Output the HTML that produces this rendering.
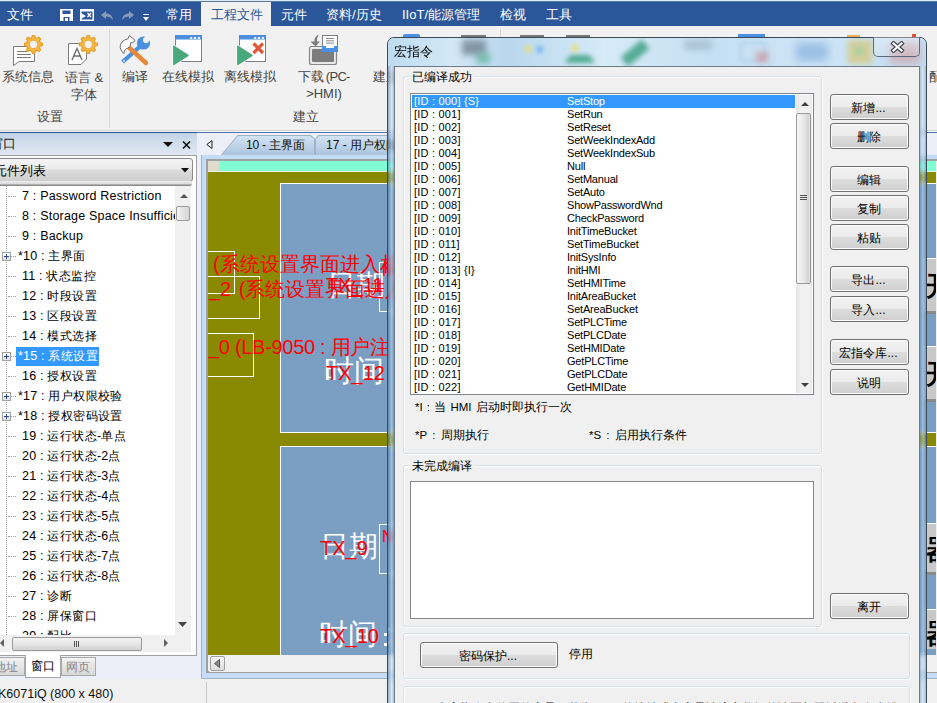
<!DOCTYPE html>
<html><head><meta charset="utf-8">
<style>
*{margin:0;padding:0;box-sizing:border-box}
html,body{width:937px;height:703px;overflow:hidden;background:#f0f0f0;font-family:"Liberation Sans",sans-serif;font-size:12px;color:#000}
.a{position:absolute}
.t{position:absolute;white-space:nowrap;line-height:1}
/* menu */
#menu{left:0;top:0;width:937px;height:26px;background:#2b579a;border-top:1px solid #d6eaf7;box-shadow:inset 0 1px 0 #5f7a96}
.mi{position:absolute;top:7px;color:#fff;font-size:13px;line-height:14px;white-space:nowrap}
#ribbon{left:0;top:26px;width:937px;height:106px;background:#f1f1f1;border-bottom:1px solid #fafafa;box-shadow:inset 0 -1px 0 #d3d3d3}
.rl{position:absolute;color:#444;font-size:13px;line-height:17px;white-space:nowrap;text-align:center}
/* left panel */
#lp{left:0;top:132px;width:197px;height:546px;background:#fff;border-top:1px solid #2b579a}
.cj{font-size:12px;letter-spacing:0.4px}
.tr{position:absolute;left:0;height:20px;line-height:20px;font-size:12.5px;letter-spacing:0.2px;white-space:nowrap;color:#000}
</style></head><body>

<!-- MENU BAR -->
<div id="menu" class="a">
  <div class="mi" style="left:7px">文件</div>
  <!-- save icon -->
  <svg class="a" style="left:60px;top:8px" width="13" height="12" viewBox="0 0 13 12"><path d="M0 0H13V12H0Z" fill="#fff"/><path d="M2.5 1.5H10.5V5H2.5Z M3.5 8H9.5V12H3.5Z" fill="#2b579a"/><path d="M5 9H8V12H5Z" fill="#fff"/></svg>
  <svg class="a" style="left:80px;top:8px" width="14" height="12" viewBox="0 0 14 12"><path d="M0 0H14V12H0Z" fill="#fff"/><path d="M1.5 2.5H12.5V10.5H1.5Z" fill="#2b579a"/><path d="M1 4L6 7L1 10Z" fill="#fff"/><path d="M7.5 4L11 8M11 4L7.5 8" stroke="#fff" stroke-width="1.3"/></svg>
  <svg class="a" style="left:101px;top:10px" width="12" height="9" viewBox="0 0 12 9"><path d="M0 4L5 0V2.5C9 2.5 11.5 5 12 9C10 6.5 8 5.5 5 5.5V8Z" fill="#8a9bb8"/></svg>
  <svg class="a" style="left:122px;top:10px" width="12" height="9" viewBox="0 0 12 9"><path d="M12 4L7 0V2.5C3 2.5 0.5 5 0 9C2 6.5 4 5.5 7 5.5V8Z" fill="#8a9bb8"/></svg>
  <svg class="a" style="left:143px;top:13px" width="6" height="7" viewBox="0 0 6 7"><path d="M0 0H6V1H0Z M0 3H6L3 7Z" fill="#fff"/></svg>
  <div class="mi" style="left:166px">常用</div>
  <div class="a" style="left:201px;top:1px;width:70px;height:25px;background:#f1f1f1"></div>
  <div class="mi" style="left:211px;color:#2b579a">工程文件</div>
  <div class="mi" style="left:281px">元件</div>
  <div class="mi" style="left:326px">资料/历史</div>
  <div class="mi" style="left:402px">IIoT/能源管理</div>
  <div class="mi" style="left:500px">检视</div>
  <div class="mi" style="left:546px">工具</div>
</div>

<!-- RIBBON -->
<div id="ribbon" class="a">
  <svg class="a" style="left:0;top:0" width="400" height="106" viewBox="0 26 400 106">
    <!-- sys info -->
    <path d="M13.5 46.5H34.5V61.5H19L13.5 65.5Z" fill="#fff" stroke="#7a7a7a" stroke-width="1"/>
    <path d="M17 51.5H27M17 54.5H31M17 57.5H31" stroke="#7a7a7a" stroke-width="1"/>
    <g transform="translate(33.5 44.4)"><path d="M6.81 -1.63 L8.92 -1.20 L8.92 1.20 L6.81 1.63 L5.97 3.66 L7.15 5.46 L5.46 7.15 L3.66 5.97 L1.63 6.81 L1.20 8.92 L-1.20 8.92 L-1.63 6.81 L-3.66 5.97 L-5.46 7.15 L-7.15 5.46 L-5.97 3.66 L-6.81 1.63 L-8.92 1.20 L-8.92 -1.20 L-6.81 -1.63 L-5.97 -3.66 L-7.15 -5.46 L-5.46 -7.15 L-3.66 -5.97 L-1.63 -6.81 L-1.20 -8.92 L1.20 -8.92 L1.63 -6.81 L3.66 -5.97 L5.46 -7.15 L7.15 -5.46 L5.97 -3.66Z" fill="#f8b840" stroke="#e2a030" stroke-width="1.2" stroke-linejoin="round"/><circle r="4.2" fill="#f1f1f1" stroke="#e2a030" stroke-width="0.8"/></g>
    <!-- lang -->
    <path d="M68.5 43.5H86.5V59L81 64.5H68.5Z" fill="#fff" stroke="#7a7a7a" stroke-width="1"/>
    <path d="M72 60L77 48.5L82 60M73.6 56H80.4" stroke="#6e6e6e" stroke-width="1.4" fill="none"/>
    <g transform="translate(88.3 44.4)"><path d="M6.81 -1.63 L8.92 -1.20 L8.92 1.20 L6.81 1.63 L5.97 3.66 L7.15 5.46 L5.46 7.15 L3.66 5.97 L1.63 6.81 L1.20 8.92 L-1.20 8.92 L-1.63 6.81 L-3.66 5.97 L-5.46 7.15 L-7.15 5.46 L-5.97 3.66 L-6.81 1.63 L-8.92 1.20 L-8.92 -1.20 L-6.81 -1.63 L-5.97 -3.66 L-7.15 -5.46 L-5.46 -7.15 L-3.66 -5.97 L-1.63 -6.81 L-1.20 -8.92 L1.20 -8.92 L1.63 -6.81 L3.66 -5.97 L5.46 -7.15 L7.15 -5.46 L5.97 -3.66Z" fill="#f8b840" stroke="#e2a030" stroke-width="1.2" stroke-linejoin="round"/><circle r="4.2" fill="#f1f1f1" stroke="#e2a030" stroke-width="0.8"/></g>
    <!-- compile -->
    <path d="M122.5 62L140 46.5" stroke="#4a90e2" stroke-width="4.2" stroke-linecap="butt"/>
    <circle cx="143.5" cy="43" r="6.6" fill="#4a90e2"/>
    <circle cx="146" cy="40" r="3.1" fill="#f1f1f1"/>
    <path d="M145 37L149.5 32.5L153.5 36.5L149 41Z" fill="#f1f1f1"/>
    <circle cx="124" cy="60.8" r="0.9" fill="#fff"/>
    <path d="M129 47.5L146 63" stroke="#e8893a" stroke-width="4.4" stroke-linecap="round"/>
    <path d="M123.8 53.5C121 51 119.8 48 120.3 45.5C121 42 124 39.5 127.8 39L129.5 35.5L135.2 40.5L132.5 42.8L130.8 42.5L130 46.5L127.5 48.3C125.5 48.5 124.5 50 123.8 53.5Z" fill="#fff" stroke="#6a6a6a" stroke-width="1" stroke-linejoin="round"/>
    <!-- online sim -->
    <rect x="175.5" y="35.5" width="26" height="26" fill="#fff" stroke="#808080"/>
    <rect x="175" y="35" width="27" height="4.5" fill="#4a90e2"/>
    <rect x="190.3" y="37" width="2" height="2" fill="#fff"/><rect x="194" y="37" width="2" height="2" fill="#fff"/><rect x="197.8" y="37" width="2" height="2" fill="#fff"/>
    <path d="M173.5 46L188.5 55.3L173.5 64.7Z" fill="#4aa87e" stroke="#f6f6f6" stroke-width="3" stroke-linejoin="round" opacity=".9"/><path d="M173.8 46.3L188 55.3L173.8 64.4Z" fill="#4aa87e" stroke="#4aa87e" stroke-width="1.4" stroke-linejoin="round"/>
    <!-- offline sim -->
    <rect x="239.5" y="35.5" width="26" height="26" fill="#fff" stroke="#808080"/>
    <rect x="239" y="35" width="27" height="4.5" fill="#4a90e2"/>
    <rect x="254.3" y="37" width="2" height="2" fill="#fff"/><rect x="258" y="37" width="2" height="2" fill="#fff"/><rect x="261.8" y="37" width="2" height="2" fill="#fff"/>
    <path d="M237.5 46L252.5 55.3L237.5 64.7Z" fill="#4aa87e" stroke="#f6f6f6" stroke-width="3" stroke-linejoin="round" opacity=".9"/><path d="M237.8 46.3L252 55.3L237.8 64.4Z" fill="#4aa87e" stroke="#4aa87e" stroke-width="1.4" stroke-linejoin="round"/>
    <path d="M253.5 43.5L263 53M263 43.5L253.5 53" stroke="#e0573a" stroke-width="3.2"/>
    <!-- download -->
    <rect x="309.5" y="46.5" width="27" height="18" rx="2" fill="#e8e8e8" stroke="#888" stroke-width="1.2"/>
    <rect x="312" y="49" width="22" height="13" rx="1" fill="#7d7d7d"/>
    <path d="M319 34.5C315.5 36 314 38.5 314.5 41.5L310.5 41.5L315.5 46.5L320 41.5L317 41.5C316.8 39 317.5 36.5 319 34.5Z" fill="#7d7d7d"/>
    <rect x="322" y="35" width="16" height="17" fill="#7d7d7d"/>
    <rect x="323" y="36" width="14" height="10" fill="#fff"/>
    <rect x="322" y="46" width="16" height="6" fill="#4a90e2"/>
    <rect x="326" y="46" width="8" height="2" fill="#fff"/>
    <path d="M326 38.5H334M326 40.8H334M326 43.1H334" stroke="#7d7d7d" stroke-width="0.9"/>
  </svg>
  <div class="a" style="left:109px;top:3px;width:1px;height:99px;background:#d6d6d6"></div>
  <div class="rl" style="left:2px;top:42px">系统信息</div>
  <div class="rl" style="left:64px;top:43px;width:40px">语言 &amp;<br>字体</div>
  <div class="rl" style="left:122px;top:42px">编译</div>
  <div class="rl" style="left:162px;top:42px">在线模拟</div>
  <div class="rl" style="left:224px;top:42px">离线模拟</div>
  <div class="rl" style="left:294px;top:42px;width:60px"><span style="letter-spacing:-0.7px">下载 (PC-</span><br>&gt;HMI)</div>
  <div class="rl" style="left:373px;top:42px">建立</div>
  <div class="rl" style="left:37px;top:82px">设置</div>
  <div class="rl" style="left:293px;top:82px">建立</div>
  <div class="rl" style="left:929px;top:42px">配</div>
</div>

<!-- LEFT PANEL -->
<div id="lp" class="a">
  <!-- header -->
  <div class="a" style="left:0;top:0;width:197px;height:22px;background:linear-gradient(#c4d4e6,#dfe8f3)"></div>
  <div class="t" style="left:-10px;top:4px;font-size:13px;color:#222">窗口</div>
  <svg class="a" style="left:162px;top:8px" width="30" height="10" viewBox="0 0 30 10"><path d="M1 1H11L6 6Z" fill="#111"/><path d="M21 0.5L28 7.5M28 0.5L21 7.5" stroke="#111" stroke-width="1.6"/></svg>
  <div class="a" style="left:0;top:22px;width:197px;height:501px;background:#fff;border-right:1px solid #a0a0a0;border-top:1px solid #a0a0a0;border-bottom:1px solid #a0a0a0"></div>
  <div class="a" style="left:197px;top:1px;width:4px;height:545px;background:#eceef8"></div>
  <!-- dropdown -->
  <div class="a" style="left:-5px;top:25px;width:198px;height:24px;border:1px solid #8a8a8a;border-radius:3px;background:linear-gradient(#f4f4f4 0%,#ebebeb 45%,#dcdcdc 50%,#cfcfcf 100%)"></div>
  <div class="t" style="left:-6px;top:31px;font-size:13px">元件列表</div>
  <svg class="a" style="left:181px;top:35px" width="8" height="5" viewBox="0 0 8 5"><path d="M0 0H8L4 4.5Z" fill="#111"/></svg>
  <div class="a" style="left:0;top:48px;width:192px;height:5px;background:linear-gradient(#eeeeee,#d8d8d8 60%,#8a8a8a 80%,#8a8a8a);border-radius:0 0 2px 0"></div>
  <!-- tree -->
  <div class="a" style="left:0;top:53px;width:191px;height:449px;overflow:hidden;background:#fff">
    <div class="a" style="left:6px;top:0;width:1px;height:449px;border-left:1px dotted #a0a0a0"></div>
    <div class="a" style="left:8px;top:10px;width:8px;height:1px;border-top:1px dotted #a0a0a0"></div>
<div class="tr" style="left:22px;top:0px">7 : Password Restriction</div>
<div class="a" style="left:8px;top:30px;width:8px;height:1px;border-top:1px dotted #a0a0a0"></div>
<div class="tr" style="left:22px;top:20px">8 : Storage Space Insufficient</div>
<div class="a" style="left:8px;top:50px;width:8px;height:1px;border-top:1px dotted #a0a0a0"></div>
<div class="tr" style="left:22px;top:40px">9 : Backup</div>
<div class="a" style="left:8px;top:70px;width:8px;height:1px;border-top:1px dotted #a0a0a0"></div>
<div class="a" style="left:2px;top:66px;width:9px;height:9px;border:1px solid #a0a0a0;background:linear-gradient(#fff,#e0e0e0)"><div class="a" style="left:1px;top:3px;width:5px;height:1px;background:#2c4a8a"></div><div class="a" style="left:3px;top:1px;width:1px;height:5px;background:#2c4a8a"></div></div>
<div class="tr" style="left:18px;top:60px">*10 : <span class="cj">主界面</span></div>
<div class="a" style="left:8px;top:90px;width:8px;height:1px;border-top:1px dotted #a0a0a0"></div>
<div class="tr" style="left:22px;top:80px">11 : <span class="cj">状态监控</span></div>
<div class="a" style="left:8px;top:110px;width:8px;height:1px;border-top:1px dotted #a0a0a0"></div>
<div class="tr" style="left:22px;top:100px">12 : <span class="cj">时段设置</span></div>
<div class="a" style="left:8px;top:130px;width:8px;height:1px;border-top:1px dotted #a0a0a0"></div>
<div class="tr" style="left:22px;top:120px">13 : <span class="cj">区段设置</span></div>
<div class="a" style="left:8px;top:150px;width:8px;height:1px;border-top:1px dotted #a0a0a0"></div>
<div class="tr" style="left:22px;top:140px">14 : <span class="cj">模式选择</span></div>
<div class="a" style="left:8px;top:170px;width:8px;height:1px;border-top:1px dotted #a0a0a0"></div>
<div class="a" style="left:2px;top:166px;width:9px;height:9px;border:1px solid #a0a0a0;background:linear-gradient(#fff,#e0e0e0)"><div class="a" style="left:1px;top:3px;width:5px;height:1px;background:#2c4a8a"></div><div class="a" style="left:3px;top:1px;width:1px;height:5px;background:#2c4a8a"></div></div>
<div class="a" style="left:16px;top:161px;width:83px;height:19px;background:#3399ff"></div>
<div class="tr" style="left:18px;top:160px;color:#fff">*15 : <span class="cj">系统设置</span></div>
<div class="a" style="left:8px;top:190px;width:8px;height:1px;border-top:1px dotted #a0a0a0"></div>
<div class="tr" style="left:22px;top:180px">16 : <span class="cj">授权设置</span></div>
<div class="a" style="left:8px;top:210px;width:8px;height:1px;border-top:1px dotted #a0a0a0"></div>
<div class="a" style="left:2px;top:206px;width:9px;height:9px;border:1px solid #a0a0a0;background:linear-gradient(#fff,#e0e0e0)"><div class="a" style="left:1px;top:3px;width:5px;height:1px;background:#2c4a8a"></div><div class="a" style="left:3px;top:1px;width:1px;height:5px;background:#2c4a8a"></div></div>
<div class="tr" style="left:18px;top:200px">*17 : <span class="cj">用户权限校验</span></div>
<div class="a" style="left:8px;top:230px;width:8px;height:1px;border-top:1px dotted #a0a0a0"></div>
<div class="a" style="left:2px;top:226px;width:9px;height:9px;border:1px solid #a0a0a0;background:linear-gradient(#fff,#e0e0e0)"><div class="a" style="left:1px;top:3px;width:5px;height:1px;background:#2c4a8a"></div><div class="a" style="left:3px;top:1px;width:1px;height:5px;background:#2c4a8a"></div></div>
<div class="tr" style="left:18px;top:220px">*18 : <span class="cj">授权密码设置</span></div>
<div class="a" style="left:8px;top:250px;width:8px;height:1px;border-top:1px dotted #a0a0a0"></div>
<div class="tr" style="left:22px;top:240px">19 : <span class="cj">运行状态</span>-<span class="cj">单点</span></div>
<div class="a" style="left:8px;top:270px;width:8px;height:1px;border-top:1px dotted #a0a0a0"></div>
<div class="tr" style="left:22px;top:260px">20 : <span class="cj">运行状态</span>-2<span class="cj">点</span></div>
<div class="a" style="left:8px;top:290px;width:8px;height:1px;border-top:1px dotted #a0a0a0"></div>
<div class="tr" style="left:22px;top:280px">21 : <span class="cj">运行状态</span>-3<span class="cj">点</span></div>
<div class="a" style="left:8px;top:310px;width:8px;height:1px;border-top:1px dotted #a0a0a0"></div>
<div class="tr" style="left:22px;top:300px">22 : <span class="cj">运行状态</span>-4<span class="cj">点</span></div>
<div class="a" style="left:8px;top:330px;width:8px;height:1px;border-top:1px dotted #a0a0a0"></div>
<div class="tr" style="left:22px;top:320px">23 : <span class="cj">运行状态</span>-5<span class="cj">点</span></div>
<div class="a" style="left:8px;top:350px;width:8px;height:1px;border-top:1px dotted #a0a0a0"></div>
<div class="tr" style="left:22px;top:340px">24 : <span class="cj">运行状态</span>-6<span class="cj">点</span></div>
<div class="a" style="left:8px;top:370px;width:8px;height:1px;border-top:1px dotted #a0a0a0"></div>
<div class="tr" style="left:22px;top:360px">25 : <span class="cj">运行状态</span>-7<span class="cj">点</span></div>
<div class="a" style="left:8px;top:390px;width:8px;height:1px;border-top:1px dotted #a0a0a0"></div>
<div class="tr" style="left:22px;top:380px">26 : <span class="cj">运行状态</span>-8<span class="cj">点</span></div>
<div class="a" style="left:8px;top:410px;width:8px;height:1px;border-top:1px dotted #a0a0a0"></div>
<div class="tr" style="left:22px;top:400px">27 : <span class="cj">诊断</span></div>
<div class="a" style="left:8px;top:430px;width:8px;height:1px;border-top:1px dotted #a0a0a0"></div>
<div class="tr" style="left:22px;top:420px">28 : <span class="cj">屏保窗口</span></div>
<div class="a" style="left:8px;top:450px;width:8px;height:1px;border-top:1px dotted #a0a0a0"></div>
<div class="tr" style="left:22px;top:440px">29 : <span class="cj">配比</span></div>
  </div>
  <!-- vscroll -->
  <div class="a" style="left:175px;top:53px;width:16px;height:449px;background:#f0f0f0"></div>
  <svg class="a" style="left:180px;top:61px" width="8" height="4" viewBox="0 0 8 4"><path d="M0 4L4 0L8 4Z" fill="#555"/></svg>
  <div class="a" style="left:176px;top:73px;width:14px;height:15px;border:1px solid #9a9a9a;border-radius:2px;background:linear-gradient(90deg,#f3f3f3,#e3e3e3 50%,#d6d6d6)"></div>
  <svg class="a" style="left:178px;top:489px" width="9" height="5" viewBox="0 0 9 5"><path d="M0 0H9L4.5 5Z" fill="#444"/></svg>
  <!-- hscroll -->
  <div class="a" style="left:0;top:502px;width:191px;height:17px;background:#f0f0f0"></div>
  <svg class="a" style="left:0;top:506px" width="4" height="8" viewBox="0 0 4 8"><path d="M4 0V8L0 4Z" fill="#606060"/></svg>
  <div class="a" style="left:12px;top:504px;width:130px;height:14px;border:1px solid #9a9a9a;border-radius:2px;background:linear-gradient(#f3f3f3,#e6e6e6 50%,#d3d3d3)"></div>
  <div class="a" style="left:74px;top:508px;width:1px;height:6px;background:#555;box-shadow:2px 0 #555,4px 0 #555"></div>
  <svg class="a" style="left:164px;top:506px" width="4" height="8" viewBox="0 0 4 8"><path d="M0 0V8L4 4Z" fill="#606060"/></svg>
  <div class="a" style="left:0;top:519px;width:196px;height:3px;background:#fff"></div>
  <!-- bottom tabs -->
  <div class="a" style="left:0;top:523px;width:197px;height:23px;background:#eceef8"></div>
  <div class="a" style="left:-8px;top:524px;width:33px;height:19px;border:1px solid #a8a8a8;background:linear-gradient(#f2f2f2,#d8d8d8)"></div>
  <div class="t" style="left:-6px;top:528px;font-size:12px;color:#888">地址</div>
  <div class="a" style="left:61px;top:524px;width:35px;height:19px;border:1px solid #a8a8a8;background:linear-gradient(#f2f2f2,#d8d8d8)"></div>
  <div class="t" style="left:66px;top:528px;font-size:12px;color:#888">网页</div>
  <div class="a" style="left:25px;top:522px;width:36px;height:23px;border:1px solid #a8a8a8;border-top:0;background:#fff"></div>
  <div class="t" style="left:31px;top:527px;font-size:12px;color:#000">窗口</div>
</div>


<!-- EDITOR AREA -->
<div class="a" style="left:197px;top:133px;width:740px;height:22px;background:#eceef8"></div>
<div class="a" style="left:197px;top:132px;width:740px;height:1px;background:#4f72aa"></div>
<svg class="a" style="left:206px;top:140px" width="7" height="9" viewBox="0 0 7 9"><path d="M6 0.5V8.5L0.8 4.5Z" fill="none" stroke="#222" stroke-width="1"/></svg>
<div class="a" style="left:220px;top:135px;width:95px;height:21px;background:#9fb3c8;clip-path:polygon(0 100%,17.5px 0,91px 0,95px 4px,95px 100%)"></div>
<div class="a" style="left:221px;top:136px;width:93px;height:20px;background:linear-gradient(#d3e3f4,#a9c3de);clip-path:polygon(0 100%,17px 0,89px 0,93px 3px,93px 100%)"></div>
<div class="a" style="left:315px;top:135px;width:110px;height:21px;background:#9fb3c8;clip-path:polygon(0 100%,0 4px,3px 0,100% 0,100% 100%)"></div>
<div class="a" style="left:316px;top:136px;width:109px;height:20px;background:linear-gradient(#d3e3f4,#a9c3de);clip-path:polygon(0 100%,0 3px,3px 0,100% 0,100% 100%)"></div>
<div class="t" style="left:246px;top:139px;font-size:12px;color:#111;letter-spacing:-0.2px">10 - 主界面</div>
<div class="t" style="left:326px;top:139px;font-size:12px;color:#111">17 - 用户权限校验</div>
<!-- frame -->
<div class="a" style="left:201px;top:155px;width:736px;height:524px;background:#c4ddf6;border-left:1px solid #a0b4c8;border-bottom:1px solid #a0b4c8"></div>
<div class="a" style="left:206px;top:159px;width:731px;height:514px;background:#f0f0f0;border:2px solid #a0a0a0;border-right:0"></div>
<!-- canvas -->
<div class="a" style="left:208px;top:161px;width:728px;height:494px;background:#8a8a00;overflow:hidden">
  <div class="a" style="left:0;top:0;width:11px;height:10px;background:#e0dccd"></div>
  <div class="a" style="left:11px;top:0;width:718px;height:10px;background:#80ffd5"></div>
  <div class="a" style="left:0;top:10px;width:729px;height:1px;background:#f0f0e0"></div>
  <div class="a" style="left:72px;top:22px;width:700px;height:250px;background:#7b9ec3;border:1px solid #fff"></div>
  <div class="a" style="left:72px;top:285px;width:700px;height:260px;background:#7b9ec3;border:1px solid #fff"></div>
  <!-- white outline rects -->
  <div class="a" style="left:0;top:90px;width:27px;height:43px;border:1px solid #fff;border-left:0"></div>
  <div class="a" style="left:0;top:115px;width:52px;height:43px;border:1px solid #fff;border-left:0"></div>
  <div class="a" style="left:0;top:172px;width:46px;height:44px;border:1px solid #fff;border-left:0"></div>
  <div class="a" style="left:171px;top:101px;width:20px;height:50px;border:1px solid #fff"></div>
  <div class="a" style="left:171px;top:363px;width:20px;height:50px;border:1px solid #fff"></div>
  <!-- white big text -->
  <div class="t" style="left:119px;top:110px;font-size:29px;color:#fff">日期</div>
  <div class="t" style="left:116px;top:195px;font-size:30px;color:#fff">时间</div>
  <div class="t" style="left:112px;top:371px;font-size:29px;color:#fff">日期</div>
  <div class="t" style="left:111px;top:459px;font-size:29px;color:#fff">时间 :</div>
  <!-- red text -->
  <div class="t" style="left:5px;top:93px;font-size:20px;color:#f00">(系统设置界面进入相</div>
  <div class="t" style="left:1px;top:118px;font-size:20px;color:#f00;word-spacing:2px">_2 (系统设置界面进入</div>
  <div class="t" style="left:118px;top:114px;font-size:20px;color:#f00">TX_11</div>
  <div class="t" style="left:0;top:176px;font-size:20px;color:#f00;letter-spacing:-0.3px">_0 (LB-9050 : 用户注</div>
  <div class="t" style="left:118px;top:202px;font-size:20px;color:#f00">TX_12</div>
  <div class="t" style="left:112px;top:377px;font-size:20px;color:#f00">TX_9</div>
  <div class="t" style="left:174px;top:368px;font-size:16px;color:#f00">N</div><div class="t" style="left:174px;top:102px;font-size:16px;color:#f00">N</div>
  <div class="t" style="left:112px;top:465px;font-size:20px;color:#f00">TX_10</div>
  <!-- right grey boxes -->
  <div class="a" style="left:717px;top:97px;width:20px;height:56px;background:#c8c8c8;border-top:1px solid #fff;border-bottom:3px solid #8a8a8a"></div>
  <div class="t" style="left:718px;top:112px;font-size:27px;font-weight:bold;color:#000">开</div>
  <div class="a" style="left:717px;top:185px;width:20px;height:56px;background:#c8c8c8;border-top:1px solid #fff;border-bottom:3px solid #8a8a8a"></div>
  <div class="t" style="left:718px;top:200px;font-size:27px;font-weight:bold;color:#000">开</div>
  <div class="a" style="left:717px;top:362px;width:20px;height:52px;background:#c8c8c8;border-top:1px solid #fff;border-bottom:3px solid #8a8a8a"></div>
  <div class="t" style="left:718px;top:376px;font-size:27px;font-weight:bold;color:#000">器</div>
  <div class="a" style="left:717px;top:448px;width:20px;height:40px;background:#c8c8c8;border-top:1px solid #fff"></div>
  <div class="t" style="left:718px;top:460px;font-size:27px;font-weight:bold;color:#000">器</div>
</div>
<!-- editor hscroll -->
<div class="a" style="left:209px;top:655px;width:728px;height:17px;background:#f0f0f0"></div>
<div class="a" style="left:210px;top:656px;width:15px;height:15px;border:1px solid #a0a0a0;border-radius:2px;background:linear-gradient(#f6f6f6,#dcdcdc)"></div>
<svg class="a" style="left:214px;top:659px" width="6" height="9" viewBox="0 0 6 9"><path d="M5.5 0.5V8.5L0.5 4.5Z" fill="#8a8a8a" stroke="#555" stroke-width="1"/></svg>
<!-- status bar -->
<div class="a" style="left:0;top:679px;width:937px;height:24px;background:#f0f0f0"></div>
<div class="a" style="left:206px;top:682px;width:1px;height:21px;background:#c8c8c8"></div>
<div class="t" style="left:-2px;top:688px;font-size:12.5px;color:#111">K6071iQ (800 x 480)</div>


<div class="a" style="left:384px;top:633px;width:3px;height:3px;background:#fff"></div><div class="a" style="left:384px;top:643px;width:3px;height:3px;background:#fff"></div>
<!-- DIALOG -->
<div class="a" style="left:403px;top:34px;width:17px;height:3px;background:#4a90e2;border-radius:2px 2px 0 0"></div>
<div class="a" style="left:461px;top:35px;width:25px;height:2px;background:#777"></div>
<div class="a" style="left:520px;top:35px;width:24px;height:2px;background:#777"></div>
<div class="a" style="left:566px;top:35px;width:24px;height:2px;background:#777"></div>
<div class="a" style="left:738px;top:34px;width:27px;height:3px;background:#4a90e2"></div>
<div class="a" style="left:847px;top:35px;width:13px;height:2px;background:#e8b050"></div>
<div class="a" style="left:912px;top:34px;width:4px;height:3px;background:#e05030"></div>
<div class="a" style="left:500px;top:29px;width:1px;height:8px;background:#d6d6d6"></div>

<style>
.lr{position:absolute;height:13px;line-height:13px;font-size:11px;white-space:nowrap}
.btn{position:absolute;border:1px solid #707070;border-radius:3px;background:linear-gradient(#f2f2f2 0%,#ebebeb 50%,#dddddd 50%,#cfcfcf 100%);text-align:center;line-height:26px;padding-right:2px;font-size:12px;color:#000;white-space:nowrap;box-shadow:inset 0 0 0 1px #fcfcfc}
.gb{position:absolute;border:1px solid #d5dfe5;border-radius:3px;box-shadow:inset 1px 1px 0 #fff, 1px 1px 0 #fff}
</style>
<div class="a" style="left:387px;top:37px;width:540px;height:680px;border:1px solid #3c4a58;border-radius:7px 7px 0 0;background:rgba(120,175,225,0.25);backdrop-filter:blur(2.5px);overflow:hidden">
  <div class="a" style="left:0;top:0;width:540px;height:29px;background:linear-gradient(90deg,#bcdaf0 0%,#d2e8f7 12%,#b6d5ec 22%,#d6ebf8 40%,#c4def2 60%,#cce4f5 80%,#c2dcf0 100%);opacity:.92"></div>
  <div class="a" style="left:0;top:0;width:540px;height:28px;overflow:hidden">
    <div class="a" style="left:74px;top:2px;width:24px;height:15px;background:#6d7f8c;filter:blur(3px);opacity:.75"></div>
    <div class="a" style="left:88px;top:15px;width:14px;height:11px;background:#5fb39a;filter:blur(3px);opacity:.7"></div>
    <div class="a" style="left:137px;top:8px;width:6px;height:6px;background:#e8e070;filter:blur(2px)"></div>
    <div class="a" style="left:149px;top:8px;width:6px;height:7px;background:#7ab8f0;filter:blur(2px)"></div>
    <div class="a" style="left:178px;top:17px;width:28px;height:8px;background:#3aa080;filter:blur(2.5px);border-radius:8px 8px 0 0;opacity:.85"></div>
    <div class="a" style="left:184px;top:7px;width:6px;height:6px;background:#e8e070;filter:blur(2px)"></div>
    <div class="a" style="left:233px;top:9px;width:28px;height:12px;background:#3a9e80;filter:blur(2.5px);transform:rotate(-40deg);opacity:.8"></div>
    <div class="a" style="left:296px;top:2px;width:28px;height:10px;background:#8fa8b8;filter:blur(3px);opacity:.5"></div>
    <div class="a" style="left:352px;top:4px;width:26px;height:20px;border:2px solid #9cc0e0;filter:blur(2px);opacity:.6"></div>
    <div class="a" style="left:368px;top:14px;width:12px;height:10px;background:#d08080;filter:blur(3px);opacity:.6"></div>
    <div class="a" style="left:408px;top:5px;width:32px;height:18px;background:#7aa8d8;filter:blur(4px);opacity:.6"></div>
    <div class="a" style="left:460px;top:2px;width:24px;height:24px;background:#d8c878;filter:blur(3px);opacity:.75"></div>
    <div class="a" style="left:466px;top:8px;width:10px;height:10px;background:#a8d0a0;filter:blur(2px);opacity:.8"></div>
    <div class="a" style="left:502px;top:4px;width:30px;height:22px;background:#d09090;filter:blur(4px);opacity:.55"></div>
  </div>
  <div class="a" style="left:0;top:28px;width:7px;height:650px;background:linear-gradient(90deg,rgba(40,80,130,.35),rgba(220,240,255,.35) 50%,rgba(40,80,130,.3))"></div>
  <div class="a" style="left:531px;top:28px;width:8px;height:650px;background:linear-gradient(90deg,rgba(40,80,130,.3),rgba(220,240,255,.35) 50%,rgba(40,80,130,.35))"></div>
</div>
<div class="t" style="left:394px;top:45px;font-size:13px;color:#000">宏指令</div>
<div class="a" style="left:873px;top:37px;width:47px;height:20px;border:1px solid #5a6878;border-top:0;border-radius:0 0 5px 5px;background:linear-gradient(rgba(255,255,255,0.35),rgba(255,255,255,0.1))"></div>
<svg class="a" style="left:890px;top:41px" width="15" height="12" viewBox="0 0 15 12"><path d="M3.5 2.5L11.5 9.5M11.5 2.5L3.5 9.5" stroke="#3c4652" stroke-width="4.4" stroke-linecap="square"/><path d="M3.5 2.5L11.5 9.5M11.5 2.5L3.5 9.5" stroke="#fff" stroke-width="2.2" stroke-linecap="square"/></svg>
<div class="a" style="left:394px;top:66px;width:526px;height:637px;background:#f0f0f0;border:1px solid #6d7b88;border-bottom:0"></div>
<!-- group 1 -->
<div class="gb" style="left:403px;top:76px;width:419px;height:378px"></div>
<div class="t" style="left:410px;top:71px;font-size:12px;padding:0 2px;background:#f0f0f0">已编译成功</div>
<div class="a" style="left:410px;top:93px;width:404px;height:302px;background:#fff;border:1px solid #828790;overflow:hidden">
<div class="a" style="left:1px;top:1px;width:384px;height:13px;background:#3399ff;width:383px"></div>
<div class="lr" style="letter-spacing:0.2px;left:3px;top:1px;color:#fff">[ID : 000] {S}</div>
<div class="lr" style="letter-spacing:-0.2px;left:156px;top:1px;color:#fff">SetStop</div>
<div class="lr" style="letter-spacing:0.2px;left:3px;top:14px;color:#000">[ID : 001]</div>
<div class="lr" style="letter-spacing:-0.2px;left:156px;top:14px;color:#000">SetRun</div>
<div class="lr" style="letter-spacing:0.2px;left:3px;top:27px;color:#000">[ID : 002]</div>
<div class="lr" style="letter-spacing:-0.2px;left:156px;top:27px;color:#000">SetReset</div>
<div class="lr" style="letter-spacing:0.2px;left:3px;top:40px;color:#000">[ID : 003]</div>
<div class="lr" style="letter-spacing:-0.2px;left:156px;top:40px;color:#000">SetWeekIndexAdd</div>
<div class="lr" style="letter-spacing:0.2px;left:3px;top:53px;color:#000">[ID : 004]</div>
<div class="lr" style="letter-spacing:-0.2px;left:156px;top:53px;color:#000">SetWeekIndexSub</div>
<div class="lr" style="letter-spacing:0.2px;left:3px;top:66px;color:#000">[ID : 005]</div>
<div class="lr" style="letter-spacing:-0.2px;left:156px;top:66px;color:#000">Null</div>
<div class="lr" style="letter-spacing:0.2px;left:3px;top:79px;color:#000">[ID : 006]</div>
<div class="lr" style="letter-spacing:-0.2px;left:156px;top:79px;color:#000">SetManual</div>
<div class="lr" style="letter-spacing:0.2px;left:3px;top:92px;color:#000">[ID : 007]</div>
<div class="lr" style="letter-spacing:-0.2px;left:156px;top:92px;color:#000">SetAuto</div>
<div class="lr" style="letter-spacing:0.2px;left:3px;top:105px;color:#000">[ID : 008]</div>
<div class="lr" style="letter-spacing:-0.2px;left:156px;top:105px;color:#000">ShowPasswordWnd</div>
<div class="lr" style="letter-spacing:0.2px;left:3px;top:118px;color:#000">[ID : 009]</div>
<div class="lr" style="letter-spacing:-0.2px;left:156px;top:118px;color:#000">CheckPassword</div>
<div class="lr" style="letter-spacing:0.2px;left:3px;top:131px;color:#000">[ID : 010]</div>
<div class="lr" style="letter-spacing:-0.2px;left:156px;top:131px;color:#000">InitTimeBucket</div>
<div class="lr" style="letter-spacing:0.2px;left:3px;top:144px;color:#000">[ID : 011]</div>
<div class="lr" style="letter-spacing:-0.2px;left:156px;top:144px;color:#000">SetTimeBucket</div>
<div class="lr" style="letter-spacing:0.2px;left:3px;top:157px;color:#000">[ID : 012]</div>
<div class="lr" style="letter-spacing:-0.2px;left:156px;top:157px;color:#000">InitSysInfo</div>
<div class="lr" style="letter-spacing:0.2px;left:3px;top:170px;color:#000">[ID : 013] {I}</div>
<div class="lr" style="letter-spacing:-0.2px;left:156px;top:170px;color:#000">InitHMI</div>
<div class="lr" style="letter-spacing:0.2px;left:3px;top:183px;color:#000">[ID : 014]</div>
<div class="lr" style="letter-spacing:-0.2px;left:156px;top:183px;color:#000">SetHMITime</div>
<div class="lr" style="letter-spacing:0.2px;left:3px;top:196px;color:#000">[ID : 015]</div>
<div class="lr" style="letter-spacing:-0.2px;left:156px;top:196px;color:#000">InitAreaBucket</div>
<div class="lr" style="letter-spacing:0.2px;left:3px;top:209px;color:#000">[ID : 016]</div>
<div class="lr" style="letter-spacing:-0.2px;left:156px;top:209px;color:#000">SetAreaBucket</div>
<div class="lr" style="letter-spacing:0.2px;left:3px;top:222px;color:#000">[ID : 017]</div>
<div class="lr" style="letter-spacing:-0.2px;left:156px;top:222px;color:#000">SetPLCTime</div>
<div class="lr" style="letter-spacing:0.2px;left:3px;top:235px;color:#000">[ID : 018]</div>
<div class="lr" style="letter-spacing:-0.2px;left:156px;top:235px;color:#000">SetPLCDate</div>
<div class="lr" style="letter-spacing:0.2px;left:3px;top:248px;color:#000">[ID : 019]</div>
<div class="lr" style="letter-spacing:-0.2px;left:156px;top:248px;color:#000">SetHMIDate</div>
<div class="lr" style="letter-spacing:0.2px;left:3px;top:261px;color:#000">[ID : 020]</div>
<div class="lr" style="letter-spacing:-0.2px;left:156px;top:261px;color:#000">GetPLCTime</div>
<div class="lr" style="letter-spacing:0.2px;left:3px;top:274px;color:#000">[ID : 021]</div>
<div class="lr" style="letter-spacing:-0.2px;left:156px;top:274px;color:#000">GetPLCDate</div>
<div class="lr" style="letter-spacing:0.2px;left:3px;top:287px;color:#000">[ID : 022]</div>
<div class="lr" style="letter-spacing:-0.2px;left:156px;top:287px;color:#000">GetHMIDate</div>
  <div class="a" style="left:385px;top:1px;width:16px;height:298px;background:linear-gradient(90deg,#e6e6e6,#f0f0f0 30%,#f0f0f0 85%,#e8e8e8)"></div>
  <svg class="a" style="left:390px;top:8px" width="8" height="4" viewBox="0 0 8 4"><path d="M0 4L4 0L8 4Z" fill="#404040"/></svg>
  <div class="a" style="left:385px;top:19px;width:15px;height:171px;border:1px solid #9a9a9a;border-radius:2px;background:linear-gradient(90deg,#f6f6f6,#e8e8e8 50%,#d4d4d4 85%,#e0e0e0)"></div>
  <div class="a" style="left:389px;top:101px;width:7px;height:1px;background:#555;box-shadow:0 2px #555,0 4px #555"></div>
  <svg class="a" style="left:390px;top:289px" width="8" height="4" viewBox="0 0 8 4"><path d="M0 0H8L4 4Z" fill="#404040"/></svg>
</div>
<div class="t" style="left:415px;top:402px;font-size:11.5px;word-spacing:1px">*I : 当 HMI 启动时即执行一次</div>
<div class="t" style="left:415px;top:430px;font-size:11.5px;word-spacing:2px">*P : 周期执行</div>
<div class="t" style="left:589px;top:430px;font-size:11.5px;word-spacing:2px">*S : 启用执行条件</div>
<!-- group 2 -->
<div class="gb" style="left:403px;top:465px;width:419px;height:162px"></div>
<div class="t" style="left:410px;top:460px;font-size:12px;padding:0 2px;background:#f0f0f0">未完成编译</div>
<div class="a" style="left:410px;top:481px;width:404px;height:138px;background:#fff;border:1px solid #828790"></div>
<!-- group 3 -->
<div class="gb" style="left:403px;top:633px;width:507px;height:46px"></div>
<div class="t" style="left:569px;top:648px;font-size:12px">停用</div>
<!-- group 4 -->
<div class="gb" style="left:403px;top:686px;width:507px;height:40px"></div>
<div class="a" style="left:436px;top:700px;width:460px;height:3px;overflow:hidden"><div class="t" style="left:0;top:1.5px;font-size:12px;color:#222">本宏指令中使用的变量，若为 PLC 的地址或者变量请注意数据的读写权限以避免发生错误情况</div></div>
<div class="btn" style="left:830px;top:94px;width:79px;height:26px">新增...</div><div class="btn" style="left:830px;top:123px;width:79px;height:26px">删除</div><div class="btn" style="left:830px;top:166px;width:79px;height:26px">编辑</div><div class="btn" style="left:830px;top:195px;width:79px;height:26px">复制</div><div class="btn" style="left:830px;top:224px;width:79px;height:26px">粘贴</div><div class="btn" style="left:830px;top:266px;width:79px;height:26px">导出...</div><div class="btn" style="left:830px;top:296px;width:79px;height:26px">导入...</div><div class="btn" style="left:830px;top:339px;width:79px;height:26px">宏指令库...</div><div class="btn" style="left:830px;top:369px;width:79px;height:26px">说明</div><div class="btn" style="left:830px;top:593px;width:79px;height:26px">离开</div><div class="btn" style="left:420px;top:642px;width:138px;height:26px">密码保护...</div>

</body></html>
